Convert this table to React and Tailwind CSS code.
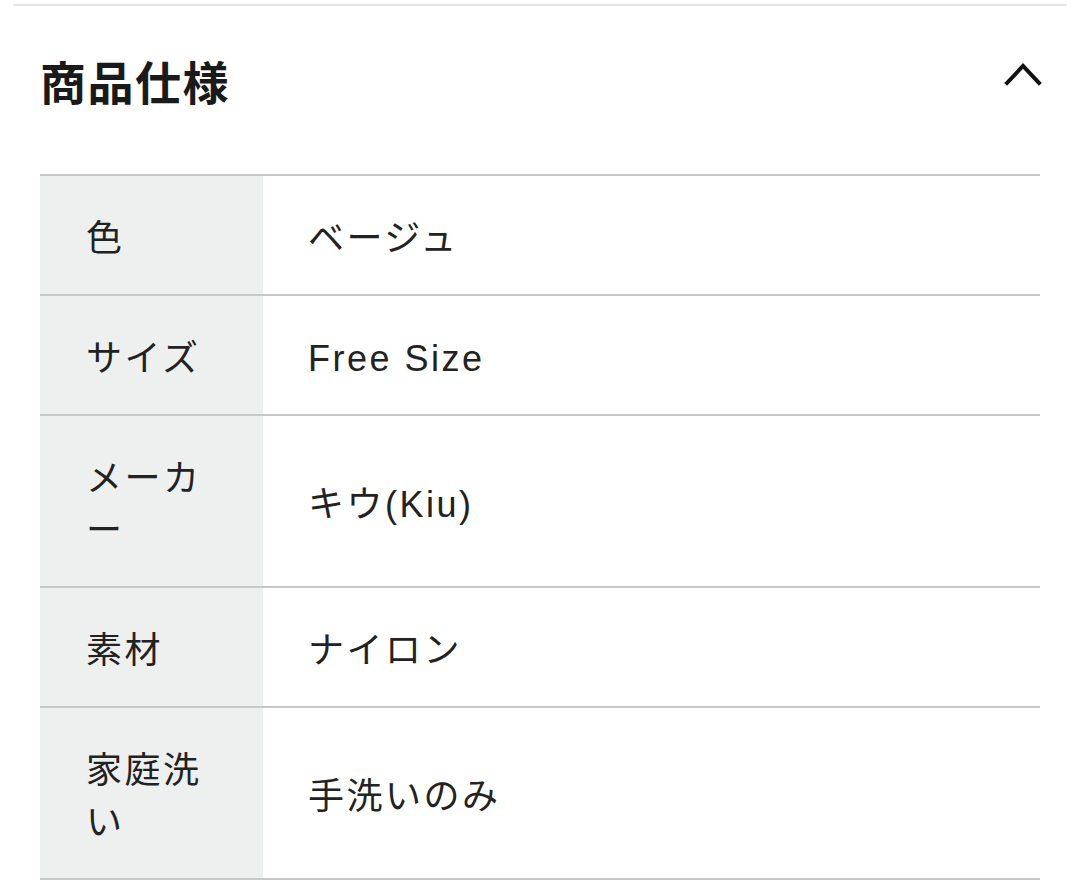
import React from "react";

const specs = [
  { label: "色", value: "ベージュ" },
  { label: "サイズ", value: "Free Size" },
  { label: "メーカー", value: "キウ(Kiu)" },
  { label: "素材", value: "ナイロン" },
  { label: "家庭洗い", value: "手洗いのみ" },
];

const font = {
  fontFamily: '"Liberation Sans", "Noto Sans CJK JP", sans-serif',
};

export default function App() {
  return (
    <div className="min-h-screen bg-white pt-[4px] text-[#222]" style={font}>
      <div className="mx-[13px] h-[2px] bg-[#e2e2e2]" />

      {/* header */}
      <div className="flex items-start justify-between px-[40px] pt-[43px]">
        <h2 className="text-[46px] font-bold leading-[70px] tracking-[1.5px] text-[#1a1a1a]">
          商品仕様
        </h2>
        <svg
          width="38"
          height="26"
          viewBox="0 0 38 26"
          className="mt-[12px] mr-[-2px]"
          fill="none"
          stroke="#111"
          strokeWidth="4"
          strokeLinecap="square"
        >
          <polyline points="3,22 19,5 35,22" />
        </svg>
      </div>

      {/* spec table */}
      <div className="mx-[40px] mt-[55px] border-t-2 border-[#c8c8c8]">
        {specs.map((row) => (
          <div
            key={row.label}
            className="grid grid-cols-[223px_1fr] border-b-2 border-[#c8c8c8]"
          >
            <div className="bg-[#eef0f0] px-[46px] pt-[37px] pb-[29px] text-[36px] leading-[52px] tracking-[2.5px]">
              {row.label}
            </div>
            <div className="flex items-center pl-[45px] pt-[8px] text-[36px] leading-[52px] tracking-[2.5px]">
              {row.value}
            </div>
          </div>
        ))}
      </div>
    </div>
  );
}
